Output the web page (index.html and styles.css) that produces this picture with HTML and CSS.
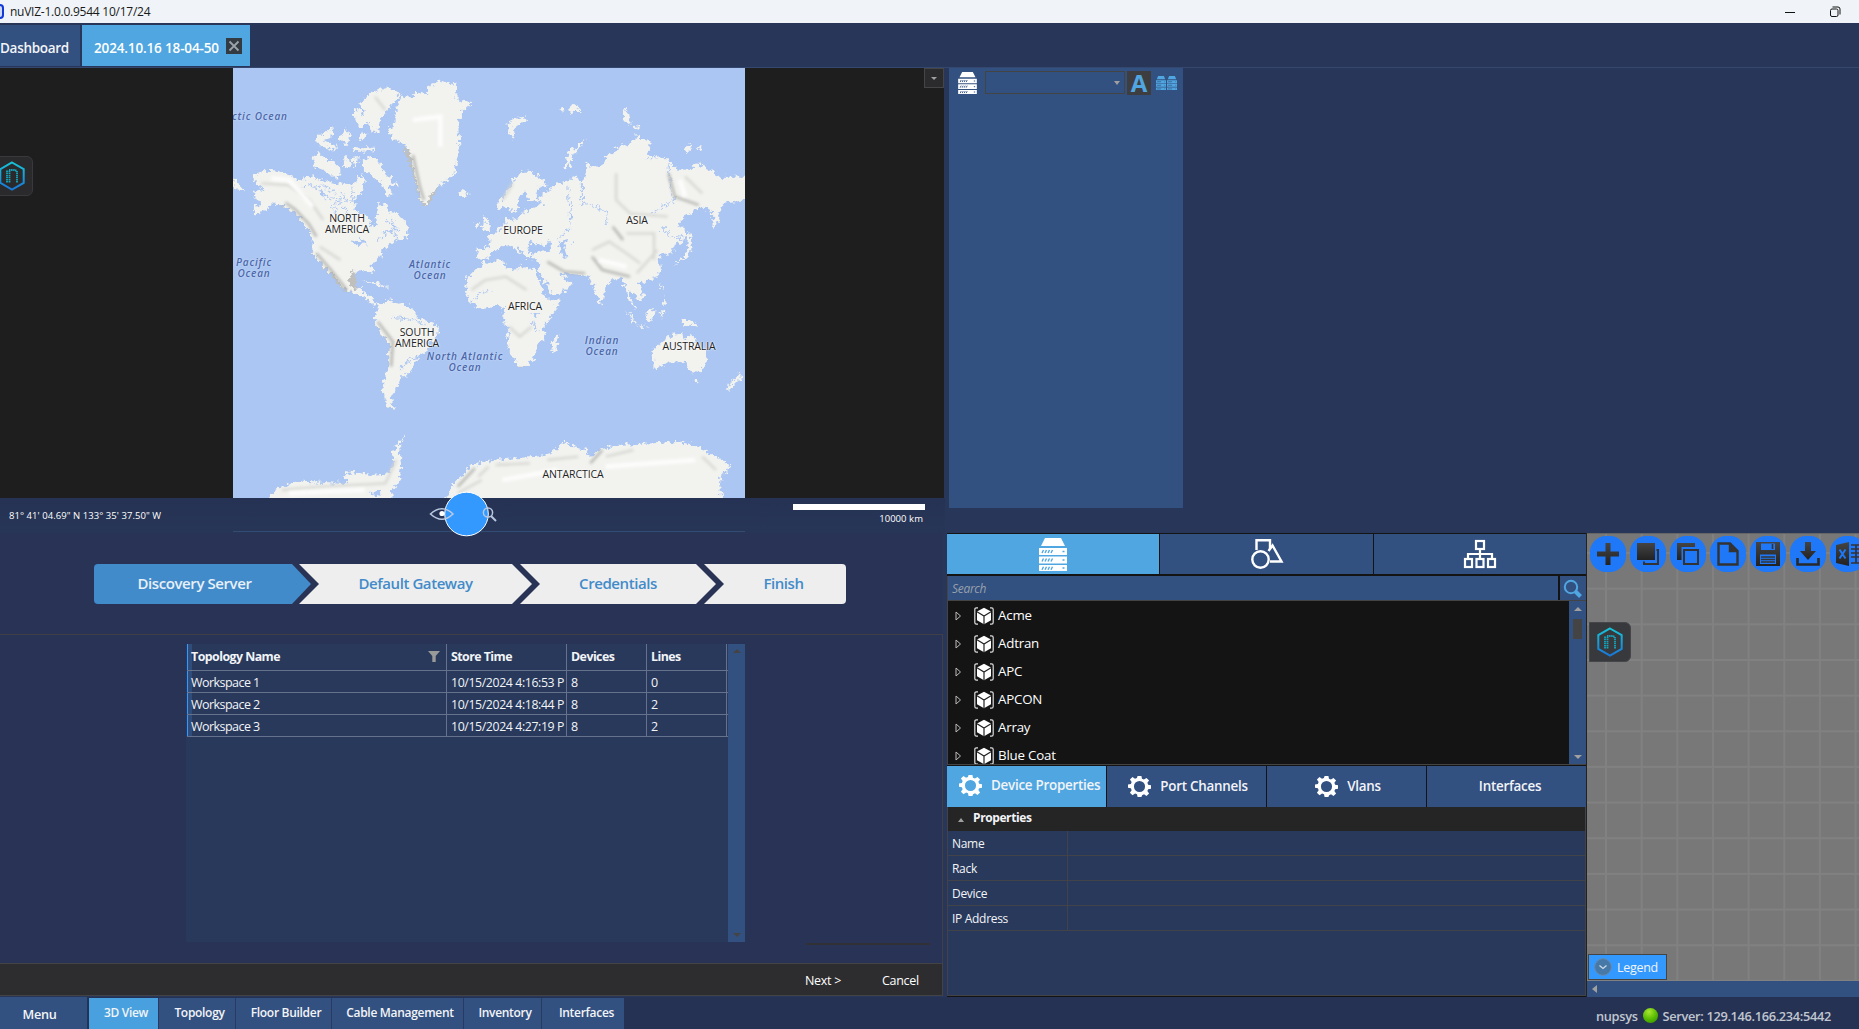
FILE: index.html
```html
<!DOCTYPE html>
<html lang="en">
<head>
<meta charset="utf-8">
<title>nuVIZ</title>
<link rel="stylesheet" href="styles.css">
</head>
<body>
<svg width="0" height="0" class="defs">
  <defs>
    <linearGradient id="ink" x1="0" y1="0" x2="0" y2="1"><stop offset="0" stop-color="#444"/><stop offset="1" stop-color="#222"/></linearGradient>
    <linearGradient id="hex" x1="0" y1="0" x2="0" y2="1"><stop offset="0" stop-color="#16c4d8"/><stop offset="1" stop-color="#1878d8"/></linearGradient>
    <symbol id="cube" viewBox="0 0 20 18" preserveAspectRatio="none">
      <path d="M4 .8H2.500Q.8 .8 .8 2.500V15.500Q.8 17.200 2.500 17.200H4M16 .8h1.500Q19.200 .8 19.200 2.500V15.500Q19.200 17.200 17.500 17.200H16" fill="none" stroke="#ddd" stroke-width="1.200"/>
      <path d="M10 .8 17 4.500V13.300L10 17.200 3 13.300V4.500Z" fill="#fff"/>
      <path d="M3 4.800 10 9 17 4.800M10 9V17.200" fill="none" stroke="#222" stroke-width="1.200"/>
    </symbol>
    <symbol id="gear" viewBox="0 0 24 24">
      <path fill="#fff" fill-rule="evenodd" d="M10 1h4l.6 3 2 .8L19.300 3l2.700 2.700-1.800 2.500.8 2 3 .5v3.600l-3 .5-.8 2 1.800 2.500-2.700 2.700-2.600-1.800-2 .8L14 23h-4l-.6-2.900-2-.8L4.700 21.100 2 18.400l1.800-2.600-.8-2-3-.5V9.800L3 9.300l.8-2L2 4.800 4.700 2.100 7.300 4l2-.8ZM12 6.200a5.800 5.800 0 1 0 0 11.600 5.800 5.800 0 0 0 0-11.600Z"/>
    </symbol>
    <symbol id="rack" viewBox="0 0 28 33">
      <path fill="currentColor" stroke="none" d="M6 0h16l4 8H2ZM0 10h28v7H0ZM0 18.500h28v7H0ZM0 27h28v6H0Z"/>
      <path d="M3 15l1.500-3M6 15l1.500-3M9 15l1.500-3M12 15l1.500-3M3 23.500l1.500-3M6 23.500l1.500-3M9 23.500l1.500-3M12 23.500l1.500-3M3 31.700l1.500-3M6 31.700l1.500-3M9 31.700l1.500-3M12 31.700l1.500-3M23.500 13.500h2M23.500 22h2M23.500 30h2" fill="none" stroke-width="1.400"/>
    </symbol>
    <symbol id="nlogo" viewBox="0 0 28 32">
      <path d="M14 2.500 25.700 9.200V22.800L14 29.500 2.300 22.800V9.200Z" fill="none" stroke="url(#hex)" stroke-width="2"/>
      <path d="M9 22.500V10.500M11.500 22.500V10.500M11 10H17M19 22.500V11M17 10.500h2" fill="none" stroke="#14a8c0" stroke-width="1.800" stroke-dasharray="1.500 .6"/>
    </symbol>
  </defs>
</svg>

<header class="titlebar">
  <span class="appicon"></span>
  <span class="apptitle">nuVIZ-1.0.0.9544 10/17/24</span>
  <svg class="winbtns" width="74" height="22" viewBox="0 0 74 22" fill="none" stroke="#111"><path d="M0 11.500h10"/><rect x="45.500" y="8" width="7.500" height="7.500" rx="1.500"/><path d="M47.500 6h5.500q2 0 2 2v5.500"/></svg>
</header>

<nav class="doctabs">
  <div class="doctab first"><span>Dashboard</span></div>
  <div class="doctab active"><span>2024.10.16 18-04-50</span>
    <svg class="close" width="16" height="16"><rect width="16" height="16" fill="#343a42"/><path d="M3.500 3.500l9 9M12.500 3.500l-9 9" stroke="#9aa4ac" stroke-width="1.800"/></svg>
  </div>
</nav>

<main class="main">
  <section class="left">
    <div class="mapview">
      <div class="logobox edge"><svg width="28" height="32"><use href="#nlogo"/></svg></div>
      <div class="mapdrop"><i class="tri down"></i></div>
      <div class="map">
        <svg class="world" viewBox="38 24 1486 1290" preserveAspectRatio="none">
          <defs>
            <filter id="coast" x="0" y="0" width="1" height="1" filterUnits="objectBoundingBox">
              <feTurbulence type="fractalNoise" baseFrequency=".075" numOctaves="3" seed="4" result="n"/>
              <feDisplacementMap in="SourceGraphic" in2="n" scale="28" xChannelSelector="R" yChannelSelector="G"/>
            </filter>
            <filter id="soft"><feGaussianBlur stdDeviation="5"/></filter>
          </defs>
          <rect x="38" y="24" width="1486" height="1290" fill="#abc6f2"/>
          <g filter="url(#coast)">
            <rect x="0" y="0" width="1600" height="1400" fill="#abc6f2"/>
            <g fill="#bfc0bd" transform="translate(-2 4)">
              <path d="M165 425L215 450 250 490 275 530 272 575 312 625 362 690 405 700 385 600 250 420Z"/>
              <path d="M535 258L560 330 573 385 588 432 605 430 640 375 600 300Z"/>
              <path d="M454 770L452 790 470 820 495 848 480 990 490 1040 520 900 510 780Z"/>
              <path d="M835 840L868 920 890 918 940 830Z"/>
            </g>
            <g fill="#f2f2ef">
              <path d="M102 345L130 332 180 335 215 350 225 365 262 348 290 360 330 370 370 372 415 365 418 390 395 415 390 450 415 462 435 475 440 500 455 495 455 470 460 430 480 430 492 455 515 460 535 480 548 510 545 530 510 540 490 560 470 575 462 600 440 615 445 652 435 630 385 632 375 660 382 688 405 685 415 675 415 700 435 708 438 715 458 730 445 734 405 705 360 690 335 650 310 625 285 600 268 570 270 530 245 490 215 455 180 435 150 430 135 450 105 465 95 450 120 425 98 410 105 395 125 390 100 370Z"/>
              <path d="M268 285L290 280 310 300 330 300 350 335 345 355 320 345 300 330 275 320Z"/>
              <path d="M415 300L440 290 465 310 480 340 500 360 518 380 490 375 500 410 480 400 470 370 440 345 415 330Z"/>
              <path d="M405 130L440 100 470 85 510 90 525 110 495 135 480 160 465 180 460 215 440 215 435 190 415 180 420 155Z"/>
              <path d="M388 150L400 143 424 180 415 205 395 190ZM278 235L325 205 320 235 300 240 345 262 320 270 280 250ZM345 240l20-35 15 30-15 20zM385 262l60 0 2 12-55 2zM365 225l14-10 4 12-10 8zM405 220l12-8 8 20-12 12zM360 295l18 0 2 25-20 5zM385 292l18 0-5 24-10 3zM395 345l18 0 8 22-20 8zM310 225l12-22 6 22z"/>
              <path d="M485 210L510 190 510 140 530 110 565 108 575 95 600 100 605 80 640 62 680 70 690 95 680 115 730 130 700 160 692 200 695 260 685 310 680 345 640 375 608 405 600 434 585 425 573 380 560 330 555 285 535 250 500 235Z"/>
              <path d="M690 400L705 388 722 395 716 410 698 412Z"/>
              <path d="M38 352l20 22 16 22-20-8-18-12z"/>
              <path d="M462 735L480 720 530 730 565 750 575 775 635 795 634 825 610 850 600 872 572 888 562 920 545 943 525 955 515 978 512 992 498 1002 498 1028 508 1048 490 1042 478 1015 475 980 485 920 495 850 465 820 448 785 452 760Z"/>
              <path d="M745 625L770 608 822 598 825 615 860 632 870 620 915 628 925 660 945 710 960 725 990 718 980 745 945 790 940 810 945 835 925 855 910 895 885 920 865 920 850 890 835 850 840 810 822 780 825 745 800 738 750 745 720 715 712 680 720 650Z"/>
              <path d="M963 845L985 822 981 860 967 880 960 862Z"/>
              <path d="M803 430L830 405 850 360 880 335 905 335 945 365 948 383 925 380 915 410 930 425 895 420 885 395 868 410 865 450 845 455 830 440 812 450Z"/>
              <path d="M745 565L780 560 790 548 775 530 805 515 825 495 830 470 845 480 870 475 880 455 920 440 935 430 925 415 945 395 985 370 1010 365 1030 350 1055 365 1065 305 1085 322 1110 315 1125 285 1160 262 1195 250 1210 225 1248 245 1242 290 1300 295 1320 325 1360 330 1380 310 1435 335 1440 355 1470 350 1540 350 1540 420 1480 425 1462 430 1440 500 1430 495 1428 455 1400 440 1345 470 1330 495 1358 510 1350 540 1320 555 1312 585 1300 580 1275 585 1280 630 1265 655 1225 665 1215 670 1230 715 1215 722 1200 700 1188 690 1192 720 1207 748 1190 735 1180 700 1165 655 1145 655 1120 680 1112 715 1103 730 1088 690 1070 650 1050 645 985 638 1000 655 1025 668 1000 695 965 705 945 670 925 630 930 605 905 597 902 585 925 575 960 572 960 545 920 565 895 565 900 585 892 598 870 560 860 560 876 585 862 578 840 555 808 562 785 585 760 600 745 590Z"/>
              <path d="M760 505l12-12-6-30 16 26 2 22-20 4zM742 490l12-4 2 16-12 4zM828 190l60-24-4 20-26 10-8 40-10-14zM1000 325l10-50 50-36-34 46-16 44zM1165 160l12-20 18 50-16 2zM1190 200l20-10 5 16zM985 150l12-6 6 8-14 4zM1010 150l18-20 16 22-20 6zM1348 260l16-6 4 18-18 0zM1380 262l18 0-2 10z"/>
              <path d="M1360 515l10 20-2 40-28 30-24 10 30-22 10-30zM1178 745l35 48-8 0zM1235 765l28-24-8 40-18-4zM1212 795l34 4-30 2zM1278 755l14-5-8 30zM1340 780l30 0 22 22-20-8-30 6zM1285 700l12 34-10 0zM1278 668l6 18-6-2zM1107 730l8 6-6 6z"/>
              <path d="M1255 870L1290 840 1320 820 1340 820 1345 838 1370 825 1385 850 1410 870 1412 900 1398 940 1365 935 1345 905 1310 908 1265 925 1258 910ZM1380 962l12 0-8 12zM1508 938l8 12-40 42-6-6zM410 660l40 6 44 20-40-10z"/>
              <path d="M645 1330L680 1270 735 1215 790 1200 920 1190 960 1180 1000 1145 1030 1160 1065 1170 1075 1200 1100 1170 1150 1155 1260 1150 1340 1145 1400 1165 1482 1215 1452 1255 1455 1330ZM120 1330L150 1300 180 1280 240 1262 370 1270 360 1250 380 1235 440 1245 490 1240 505 1215 500 1180 515 1145 540 1120 520 1155 527 1230 520 1265 500 1290 495 1330Z"/>
            </g>
            <g fill="#abc6f2">
              <path d="M983 545L1005 540 1000 560 1010 592 992 588ZM898 545l48 12-10 14-40-4zM1022 540l10 4-6 12zM905 760l20 0-8 16zM390 432l20 0 18 30-24 0zM380 545l30-8 20 16-30 2zM440 1296l28-4 0 14-20 4z"/>
            </g>
            <g fill="none" stroke="#abc6f2" stroke-width="3">
              <path d="M1052 370v60l40 10 36 20-10 40M1300 310l10 80 10 30-70 40M1010 380l10 120-40 40M1280 500l30 30 45 10M500 772l70 8 20 10M520 930l30-30 30-10M735 720l30-25 20 0M905 785l20 30M300 380l40 20M290 400l60 20M330 430l50 -10M350 390l20 40M240 380l60 -5M310 410l30 50M480 480l40 30M470 520l40 -10M380 380l10 50M260 370l50 40M360 440l20 40M500 470l10 60M460 540l50-40"/>
            </g>
          </g>
          <g fill="none" stroke="#b0b0ac" stroke-width="7" filter="url(#soft)">
            <path d="M190 428L218 448 258 492 280 530M280 580L322 630 368 690M458 785L502 845 497 920M1080 590L1110 630 1190 650M950 605L1000 635 1060 640M1302 340L1320 410 1390 435M1140 500L1170 540M1075 1210L1110 1170M690 1280L740 1225M560 285L580 380 592 420"/>
          </g>
          <g fill="none" stroke="#d6d6d1" stroke-width="7" filter="url(#soft)">
            <path d="M120 370L200 375 260 420 300 480M290 560L350 600M1080 570L1130 545 1180 580 1220 610M1150 340L1150 420 1190 460 1300 470M730 690L770 660 830 650 890 690M840 800L870 830 905 800M1180 520L1260 520 1260 600M1210 640L1270 570M1350 350L1400 400M750 1250L780 1220M180 1290L300 1280 480 1270 512 1200M950 1200L1040 1190M820 420L850 370M450 110L480 150M800 1215L900 1210M1120 1190L1200 1170M1400 1190L1440 1230M690 1300L760 1260"/>
          </g>
          <g fill="none" stroke="#fdfdfc" stroke-width="14" filter="url(#soft)">
            <path d="M560 180L640 170 640 260M1100 600L1180 620M150 355L200 360 270 440M1120 1220L1380 1200M820 1260L980 1230M200 1300L420 1290M1335 360L1350 410"/>
          </g>
        </svg>
        <span class="sea arctic">ctic Ocean</span>
        <span class="sea" style="left:21px;top:189px">Pacific<br>Ocean</span>
        <span class="sea" style="left:197px;top:191px">Atlantic<br>Ocean</span>
        <span class="sea" style="left:232px;top:283px">North Atlantic<br>Ocean</span>
        <span class="sea" style="left:369px;top:267px">Indian<br>Ocean</span>
        <span class="land" style="left:114px;top:145px">NORTH<br>AMERICA</span>
        <span class="land" style="left:290px;top:157px">EUROPE</span>
        <span class="land" style="left:404px;top:147px">ASIA</span>
        <span class="land" style="left:292px;top:233px">AFRICA</span>
        <span class="land" style="left:184px;top:259px">SOUTH<br>AMERICA</span>
        <span class="land" style="left:456px;top:273px">AUSTRALIA</span>
        <span class="land" style="left:340px;top:401px">ANTARCTICA</span>
      </div>
    </div>
    <div class="mapstatus">
      <span class="coords">81° 41' 04.69" N 133° 35' 37.50" W</span>
      <svg class="nav" width="70" height="46" viewBox="0 0 70 46"><circle cx="37.500" cy="23" r="21.800" fill="#3399ff" stroke="#fff"/><path d="M1.500 23Q13 12.500 24 23 13 33.500 1.500 23Z" fill="none" stroke="#b8c8e0" stroke-width="1.600"/><circle cx="13" cy="22.500" r="2.600" fill="#fff"/><circle cx="59" cy="21.500" r="4.600" fill="none" stroke="#b8c8e0" stroke-width="1.500"/><path d="M62 25l5 5" stroke="#b8c8e0" stroke-width="2"/></svg>
      <div class="scale"><i></i><span>10000 km</span></div>
    </div>
    <div class="wizard">
      <div class="steps">
        <div class="step s1">Discovery Server</div><div class="step s2">Default Gateway</div><div class="step s3">Credentials</div><div class="step s4">Finish</div>
      </div>
    </div>
    <div class="wizbody">
      <div class="gridwrap">
        <div class="table">
          <div class="tr head"><div class="c1"><span>Topology Name</span><svg width="12" height="11"><path d="M0 0h12L7.700 5v6H4.300V5Z" fill="#999"/></svg></div><div>Store Time</div><div>Devices</div><div>Lines</div></div>
          <div class="tr"><div class="c1">Workspace 1</div><div>10/15/2024 4:16:53 P</div><div>8</div><div>0</div></div>
          <div class="tr"><div class="c1">Workspace 2</div><div>10/15/2024 4:18:44 P</div><div>8</div><div>2</div></div>
          <div class="tr"><div class="c1">Workspace 3</div><div>10/15/2024 4:27:19 P</div><div>8</div><div>2</div></div>
        </div>
        <div class="vbar dark"><i class="tri up"></i><i class="tri down"></i></div>
      </div>
      <div class="shade"></div>
    </div>
    <div class="wizfoot"><span class="next">Next &gt;</span><span class="cancel">Cancel</span></div>
  </section>

  <section class="right">
    <div class="racks">
      <div class="rackpanel">
        <svg class="ricon white" width="19" height="22"><use href="#rack"/></svg>
        <div class="combo"><i class="tri down"></i></div>
        <div class="abtn">A</div>
        <svg class="mini" width="10" height="14"><use href="#rack"/></svg><svg class="mini" width="10" height="14"><use href="#rack"/></svg>
      </div>
    </div>
    <div class="lower">
      <div class="devices">
        <div class="dtabs">
          <div class="dtab on"><svg class="ricon blue" width="28" height="33"><use href="#rack"/></svg></div>
          <div class="dtab"><svg width="34" height="32" fill="none" stroke="#fff" stroke-width="2.400"><path d="M6.500 12V2.200H20V11"/><circle cx="10.500" cy="21.500" r="8.200"/><path d="M18.500 13 22.500 7.500 31.500 23.500H20"/></svg></div>
          <div class="dtab"><svg width="34" height="30" fill="none" stroke="#fff" stroke-width="2.200"><rect x="13" y="2" width="8" height="8"/><path d="M17 10v10M5 20v-5h24v5"/><rect x="2" y="20" width="7" height="8"/><rect x="13.500" y="20" width="7" height="8"/><rect x="25" y="20" width="7" height="8"/></svg></div>
        </div>
        <div class="search"><div class="field">Search</div><div class="go"><svg width="20" height="20" fill="none" stroke="#50a6e0"><circle cx="8" cy="8" r="6.200" stroke-width="2"/><path d="M12.500 12.500l5 5" stroke-width="4"/></svg></div></div>
        <div class="tree">
          <div class="nodes">
            <div class="node"><svg class="exp" width="7" height="10"><path d="M1 1v8l4.500-4Z"/></svg><svg width="20" height="18"><use href="#cube"/></svg><span>Acme</span></div>
            <div class="node"><svg class="exp" width="7" height="10"><path d="M1 1v8l4.500-4Z"/></svg><svg width="20" height="18"><use href="#cube"/></svg><span>Adtran</span></div>
            <div class="node"><svg class="exp" width="7" height="10"><path d="M1 1v8l4.500-4Z"/></svg><svg width="20" height="18"><use href="#cube"/></svg><span>APC</span></div>
            <div class="node"><svg class="exp" width="7" height="10"><path d="M1 1v8l4.500-4Z"/></svg><svg width="20" height="18"><use href="#cube"/></svg><span>APCON</span></div>
            <div class="node"><svg class="exp" width="7" height="10"><path d="M1 1v8l4.500-4Z"/></svg><svg width="20" height="18"><use href="#cube"/></svg><span>Array</span></div>
            <div class="node last"><svg class="exp" width="7" height="10"><path d="M1 1v8l4.500-4Z"/></svg><svg width="20" height="18"><use href="#cube"/></svg><span>Blue Coat</span></div>
          </div>
          <div class="vbar"><i class="tri up"></i><b></b><i class="tri down"></i></div>
        </div>
        <div class="ptabs">
          <div class="ptab on"><svg width="23" height="23"><use href="#gear"/></svg><span>Device Properties</span></div>
          <div class="ptab"><svg width="23" height="23"><use href="#gear"/></svg><span>Port Channels</span></div>
          <div class="ptab"><svg width="23" height="23"><use href="#gear"/></svg><span>Vlans</span></div>
          <div class="ptab last"><span>Interfaces</span></div>
        </div>
        <div class="props">
          <div class="phead"><i class="tri up"></i><span>Properties</span></div>
          <div class="prow"><span>Name</span></div>
          <div class="prow"><span>Rack</span></div>
          <div class="prow"><span>Device</span></div>
          <div class="prow"><span>IP Address</span></div>
        </div>
      </div>
      <div class="canvas">
        <div class="surface">
          <div class="tools">
            <div class="tool"><svg width="24" height="24"><path d="M9.500 1h5v8.500H23v5h-8.500V23h-5v-8.500H1v-5h8.500Z" fill="url(#ink)"/></svg></div>
            <div class="tool"><svg width="24" height="24"><path d="M1 1h18v17H1Z" fill="url(#ink)"/><path d="M20.500 8H22v14H8v-2.500" fill="none" stroke="#333" stroke-width="2"/></svg></div>
            <div class="tool"><svg width="24" height="24"><path d="M1 1h18v4H5.500v13H1Z" fill="url(#ink)"/><rect x="8" y="8" width="14" height="14" fill="none" stroke="#333" stroke-width="2"/></svg></div>
            <div class="tool"><svg width="24" height="24" fill="none" stroke="#333" stroke-width="2.400"><path d="M2.500 1.500H14L21.500 9V22.500H2.500Z"/><path d="M14 1.500V9h7.500" fill="#333"/></svg></div>
            <div class="tool"><svg width="24" height="24"><path d="M0 0h24v24H0Z" fill="url(#ink)"/><path d="M5 1.500h14V8H5ZM4 12.500h16V22H4Z" fill="#1e78f8"/><path d="M16.500 2v5M5 15h14M5 17.500h14M5 20h14" stroke="#333" stroke-width="1.600"/></svg></div>
            <div class="tool"><svg width="24" height="24"><path d="M9 0h6v9h5l-8 9-8-9h5Z" fill="url(#ink)"/><path d="M1.500 16v6.500h21V16" fill="none" stroke="#292929" stroke-width="2.600"/></svg></div>
            <div class="tool"><svg width="26" height="24"><path d="M0 3 13 0v24L0 21Z" fill="url(#ink)"/><path d="M15 3h9v18h-9M15 7h10M15 11h10M15 15h10M20 3v18" fill="none" stroke="#333" stroke-width="1.700"/><path d="M3.500 7.500l6 9M9.500 7.500l-6 9" stroke="#1e78f8" stroke-width="2"/></svg></div>
          </div>
          <div class="logobox"><svg width="28" height="32"><use href="#nlogo"/></svg></div>
          <div class="legend"><svg width="18" height="18"><circle cx="9" cy="9" r="8.300" fill="#4678a8" stroke="#6888a8"/><path d="M5.500 7.500l3.500 3 3.500-3" fill="none" stroke="#d0dcea" stroke-width="1.300"/></svg><span>Legend</span></div>
        </div>
        <div class="hbar"><i></i></div>
      </div>
    </div>
  </section>
</main>

<footer class="bottom">
  <div class="menu">Menu</div>
  <div class="btab on" style="width:70px">3D View</div>
  <div class="btab" style="width:77px">Topology</div>
  <div class="btab" style="width:96px">Floor Builder</div>
  <div class="btab" style="width:132px">Cable Management</div>
  <div class="btab" style="width:78px">Inventory</div>
  <div class="btab" style="width:82px">Interfaces</div>
  <div class="status"><span>nupsys</span><i></i><span>Server: 129.146.166.234:5442</span></div>
</footer>
</body>
</html>
```
FILE: styles.css
```css
* { box-sizing: border-box; }
html, body { margin: 0; height: 1029px; overflow: hidden; }
body { display: flex; flex-direction: column; background: #28365a; color: #f2f4f8; font: 12.5px/16px "Open Sans", "Noto Sans", sans-serif; letter-spacing: -.3px; white-space: nowrap; }
.defs { position: absolute; }
svg { display: block; flex: none; }

.titlebar { height: 23px; flex: none; background: #f0f4f8; color: #1a1a1a; display: flex; align-items: center; font-size: 12px; letter-spacing: -.25px; }
.appicon { width: 4px; height: 15px; border: 2px solid #1238d8; border-left: 0; border-radius: 0 4px 4px 0; margin-right: 6px; background: #cfd8f5; }
.apptitle { flex: 1; }

.doctabs { height: 45px; flex: none; display: flex; gap: 2px; padding: 2px 0 1px; border-bottom: 1px solid #34486f; font-weight: 600; font-size: 13.500px; }
.doctab { display: flex; align-items: center; background: #325080; padding-top: 4px; }
.doctab.first { width: 80px; }
.doctab.active { width: 168px; background: #50a6e0; padding-left: 12px; gap: 7px; color: #fff; letter-spacing: -.15px; }
.close { margin-top: -3px; }

.main { height: 929px; flex: none; display: flex; }
.left { width: 947px; flex: none; display: flex; flex-direction: column; }
.mapview { height: 430px; width: 944px; background: #1e1e1e; position: relative; padding-left: 233px; }
.map { width: 512px; height: 430px; position: relative; overflow: hidden; }
.world { width: 512px; height: 430px; }
.sea, .land { position: absolute; text-align: center; transform: translateX(-50%); line-height: 11px; font-size: 10.500px; }
.sea { color: #4a66a8; font-style: italic; font-weight: 600; font-size: 10px; letter-spacing: .85px; text-shadow: 0 0 2px #d8e6ff; }
.sea.arctic { transform: none; left: -1px; top: 43px; }
.land { color: #222; letter-spacing: -.1px; text-shadow: 0 0 2px #fff, 0 0 2px #fff; font-weight: 500; }
.logobox { width: 42px; height: 40px; background: #38393d; border: 1px solid #45464a; border-radius: 0 6px 6px 0; display: flex; align-items: center; justify-content: center; }
.logobox.edge { position: absolute; left: -9px; top: 88px; background: #2a2a2d; border-color: #39393d; }
.mapdrop { position: absolute; right: 0; top: 0; width: 20px; height: 20px; background: #2b2b2d; border: 1px solid #454547; display: flex; align-items: center; justify-content: center; }
.mapdrop .tri { border-width: 3px 3px 0; }
.tri { display: block; width: 0; height: 0; border: 4px solid transparent; border-bottom-width: 0; border-top-color: #a0a0a0; }
.tri.up { border-bottom: 4px solid #a0a0a0; border-top: 0; }

.mapstatus { height: 35px; width: 945px; background: linear-gradient(#253253, #273557); position: relative; display: flex; justify-content: space-between; font-size: 9.500px; color: #fff; padding: 6px 20px 0 9px; letter-spacing: .05px; }
.mapstatus::after { content: ""; position: absolute; left: 233px; width: 512px; bottom: 1px; height: 1px; background: #344c74; }
.coords { padding-top: 4px; }
.nav { position: absolute; left: 429px; top: -7px; z-index: 2; }
.scale { width: 132px; text-align: right; line-height: 16px; }
.scale i { display: block; height: 6px; background: #fff; margin-bottom: 1px; }
.scale span { padding-right: 2px; }

.wizard { height: 102px; width: 943px; background: #293355; border-bottom: 1px solid #403f45; padding: 31px 0 0 94px; }
.steps { display: flex; width: 752px; height: 40px; border-radius: 4px; overflow: hidden; }
.step { display: flex; align-items: center; justify-content: center; background: #eee; color: #428bca; font-size: 15px; font-weight: 600; letter-spacing: -.42px; padding-bottom: 2px; }
.s1 { width: 217px; background: #428bca; color: #e8f0f8; clip-path: polygon(0 0, 198px 0, 100% 50%, 198px 100%, 0 100%); padding-right: 16px; }
.s2 { width: 233px; margin-left: -12px; clip-path: polygon(0 0, 213px 0, 100% 50%, 213px 100%, 0 100%, 20px 50%); }
.s3 { width: 196px; margin-left: -12px; clip-path: polygon(0 0, 176px 0, 100% 50%, 176px 100%, 0 100%, 20px 50%); }
.s4 { width: 142px; margin-left: -12px; clip-path: polygon(0 0, 100% 0, 100% 100%, 0 100%, 20px 50%); padding-left: 17px; }

.wizbody { height: 328px; width: 943px; background: #293355; border-right: 1px solid #403f45; padding: 9px 0 0 186px; }
.gridwrap { display: flex; width: 559px; height: 298px; background: #28395b; }
.table { width: 542px; }
.tr { display: grid; grid-template-columns: 260px 120px 80px 80px; height: 22px; border-bottom: 1px solid #66728c; margin-left: 1px; }
.tr > div { border-right: 1px solid #66728c; padding: 4px 0 0 4px; overflow: hidden; line-height: 16px; }
.tr:not(.head) > div:nth-child(2) { font-size: 12.300px; letter-spacing: -.38px; }
.tr .c1 { border-left: 1px solid #3399ff; padding-left: 3px; letter-spacing: -.55px; background: linear-gradient(90deg, #2e4d7c 4px, transparent 4px); }
.tr.head { height: 27px; font-weight: 700; letter-spacing: -.55px; font-size: 12.400px; }
.tr.head > div { padding-top: 5px; }
.head .c1 { display: flex; justify-content: space-between; padding-right: 6px; }
.head svg { margin-top: 2px; }
.vbar { width: 17px; background: #325080; display: flex; flex-direction: column; justify-content: space-between; align-items: center; padding: 5px 0; }
.vbar.dark .tri.down { border-top-color: #444; }
.vbar.dark .tri.up { border-bottom-color: #444; }
.shade { width: 124px; height: 2px; background: #303035; margin: 1px 0 0 620px; }
.wizfoot { height: 33px; width: 943px; background: #2d2d2f; border: 1px solid #434345; border-left: 0; display: flex; align-items: center; color: #fff; padding: 2px 0 0 805px; gap: 41px; }

.right { flex: 1; min-width: 0; display: flex; flex-direction: column; }
.racks { height: 465px; padding-left: 2px; }
.rackpanel { width: 234px; height: 440px; background: #325080; display: flex; padding: 3px 0 0 9px; }
.ricon.white { color: #fff; margin-top: 1px; stroke: #325080; }
.ricon.blue { color: #fff; stroke: #50a6e0; }
.combo { width: 140px; height: 23px; border: 1px solid #444; margin: 0 2px 0 8px; display: flex; align-items: center; justify-content: flex-end; padding-right: 4px; }
.combo .tri { border-width: 4px 3px 0; }
.abtn { width: 24px; height: 24px; background: #3e3e40; color: #50a6e0; font-size: 24px; line-height: 23px; font-weight: 700; text-align: center; margin-right: 5px; }
.mini { color: #50a6e0; stroke: #325080; margin: 5px 1px 0 0; transform: scaleY(1.200); }
.lower { height: 464px; display: flex; }
.devices { width: 640px; flex: none; background: #141414; display: flex; flex-direction: column; border-right: 1px solid #222; }
.dtabs { display: grid; grid-template-columns: 212px 213px 212px; gap: 1px; height: 41px; padding-top: 1px; }
.dtab { background: #325080; display: flex; align-items: center; justify-content: center; }
.dtab.on { background: #50a6e0; }
.search { display: flex; gap: 2px; height: 25px; margin-top: 2px; border-bottom: 1px solid #444; }
.field { width: 614px; background: #325080; border-left: 1px solid #444; padding: 5px 4px; color: #98a0ac; font-style: italic; font-size: 12px; }
.go { flex: 1; background: #325080; padding: 3px; }
.tree { height: 164px; background: #141414; display: flex; border-bottom: 1px solid #444; border-left: 1px solid #444; }
.nodes { flex: 1; overflow: hidden; height: 163px; }
.node { height: 28px; display: flex; align-items: center; padding: 1px 0 0 7px; color: #fff; font-size: 13.300px; letter-spacing: -.2px; }
.exp { margin-right: 12px; fill: none; stroke: #bbb; }
.node span { margin: -2px 0 0 4px; }
.node.last { height: 23px; align-items: flex-start; padding-top: 6px; }
.node.last .exp { margin-top: 4px; }
.node.last span { margin-top: 0; }
.tree .vbar b { width: 9px; height: 20px; background: #444; margin: 8px 0 auto; }
.tree .vbar { padding-top: 6px; }
.ptabs { display: grid; grid-template-columns: repeat(4, 1fr); gap: 1px; height: 42px; padding-top: 1px; }
.ptab { background: #325080; display: flex; align-items: center; justify-content: center; gap: 9px; font-weight: 600; font-size: 13.400px; letter-spacing: -.25px; overflow: hidden; padding: 0 0 1px 3px; }
.ptab.last { padding-left: 7px; }
.ptab.on { background: #50a6e0; justify-content: flex-start; padding: 0 3px 2px 12px; }
.ptab.on span { margin-top: -1px; }
.props { flex: 1; background: #28395b; border: 1px solid #414348; border-top: 0; margin-bottom: 1px; }
.phead { height: 24px; background: #252525; display: flex; align-items: center; gap: 9px; padding: 0 0 2px 10px; font-weight: 700; font-size: 12px; letter-spacing: -.4px; }
.phead .tri { border-width: 0 3px 4px; margin-top: 3px; }
.prow { height: 25px; border-bottom: 1px solid #414348; font-size: 12px; }
.prow span { display: block; width: 120px; height: 24px; border-right: 1px solid #414348; padding: 5px 0 0 4px; }

.canvas { flex: 1; min-width: 0; display: flex; flex-direction: column; }
.surface { height: 448px; position: relative; border-top: 1px solid #666; background-color: #787878; background-image: linear-gradient(90deg, #818181 2px, transparent 2px), linear-gradient(#818181 2px, transparent 2px); background-size: 35.670px 35.670px; background-position: 18px 18px; padding-left: 2px; display: flex; flex-direction: column; overflow: hidden; }
.tools { display: flex; gap: 4px; padding: 2px 0 0 1px; }
.tool { width: 36px; height: 36px; flex: none; border-radius: 16px; background: #1e78f8; display: flex; align-items: center; justify-content: center; }
.tool:last-child { justify-content: flex-start; padding-left: 6px; }
.surface .logobox { margin-top: 50px; }
.legend { margin: auto 0 1px -1px; width: 79px; height: 26px; background: #3399ff; border: 1px solid #444; display: flex; align-items: center; gap: 5px; padding-left: 5px; font-size: 12.500px; }
.legend span { padding-top: 1px; }
.hbar { height: 16px; background: #325080; padding: 4px 5px; }
.hbar i { display: block; width: 0; height: 0; border: 4px solid transparent; border-right: 5px solid #a0a0a0; border-left: 0; }

.bottom { height: 32px; flex: none; background: #263254; display: flex; font-weight: 600; font-size: 12px; align-items: stretch; }
.bottom > div { flex: none; }
.menu { width: 88px; background: #325080; border-right: 1px solid #263254; margin-right: 1px; text-align: center; padding: 9px 8px 0 0; font-size: 12.700px; }
.btab { background: #325080; border-right: 1px solid #283a60; margin-top: 1px; text-align: center; padding: 7px 0 0 5px; }
.btab.on { background: #48a0de; }
.btab:nth-child(7) { border-right: 0; padding-left: 7px; }
.bottom > .status { margin-left: auto; width: 263px; display: flex; padding-top: 11px; color: #c0c6d0; font-size: 12.800px; letter-spacing: -.33px; }
.status i { width: 15px; height: 15px; border-radius: 50%; background: radial-gradient(circle at 40% 25%, #a8e830, #55b800 55%, #2f8800); margin: 0 5px; }
```
